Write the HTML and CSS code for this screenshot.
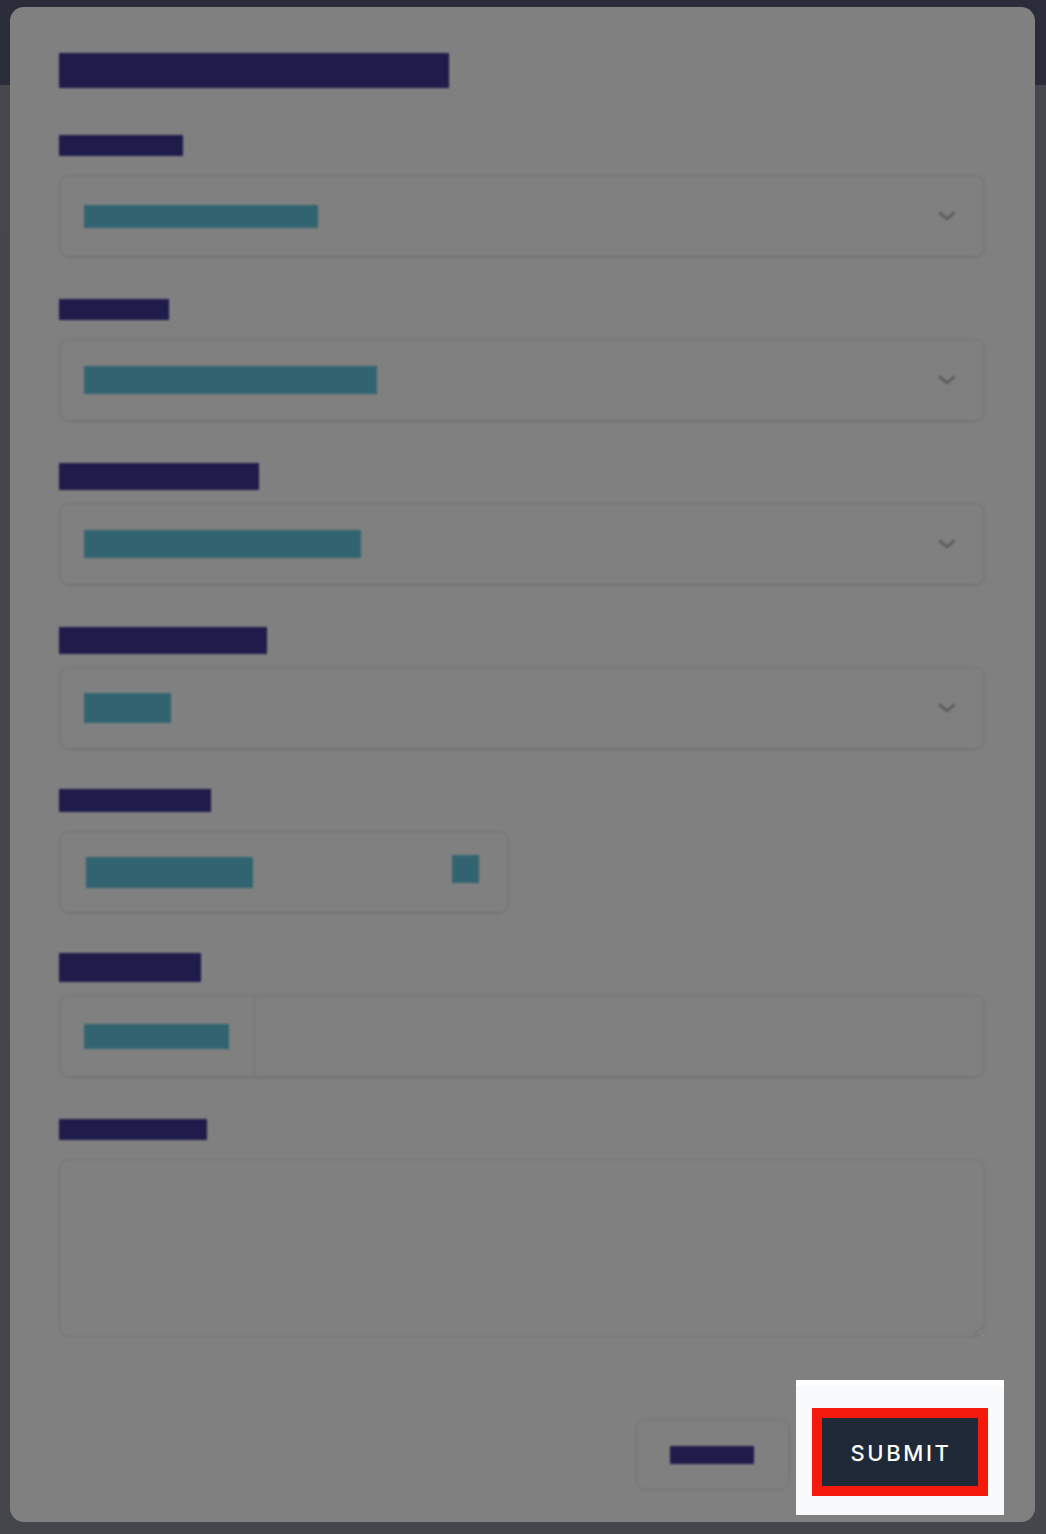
FILE: index.html
```html
<!DOCTYPE html>
<html lang="en">
<head>
<meta charset="utf-8">
<title>Form</title>
<link rel="stylesheet" href="styles.css">
</head>
<body>
<div class="page">
  <div class="modal">
    <div class="form">
      <div class="title"></div>

      <div class="field">
        <div class="label"><span class="lbar" style="width:124px;height:21px"></span></div>
        <div class="control select">
          <span class="vbar" style="width:234px;height:23px"></span>
          <svg class="chev" width="18" height="10" viewBox="0 0 18 10"><path d="M2 2l7 6 7-6" fill="none" stroke="#5a5a5a" stroke-width="2.6" stroke-linecap="round" stroke-linejoin="round"/></svg>
        </div>
      </div>

      <div class="field">
        <div class="label"><span class="lbar" style="width:110px;height:21px"></span></div>
        <div class="control select">
          <span class="vbar" style="width:293px;height:28px"></span>
          <svg class="chev" width="18" height="10" viewBox="0 0 18 10"><path d="M2 2l7 6 7-6" fill="none" stroke="#5a5a5a" stroke-width="2.6" stroke-linecap="round" stroke-linejoin="round"/></svg>
        </div>
      </div>

      <div class="field">
        <div class="label"><span class="lbar" style="width:200px;height:27px"></span></div>
        <div class="control select">
          <span class="vbar" style="width:277px;height:28px"></span>
          <svg class="chev" width="18" height="10" viewBox="0 0 18 10"><path d="M2 2l7 6 7-6" fill="none" stroke="#5a5a5a" stroke-width="2.6" stroke-linecap="round" stroke-linejoin="round"/></svg>
        </div>
      </div>

      <div class="field">
        <div class="label"><span class="lbar" style="width:208px;height:27px"></span></div>
        <div class="control select">
          <span class="vbar" style="width:87px;height:30px"></span>
          <svg class="chev" width="18" height="10" viewBox="0 0 18 10"><path d="M2 2l7 6 7-6" fill="none" stroke="#5a5a5a" stroke-width="2.6" stroke-linecap="round" stroke-linejoin="round"/></svg>
        </div>
      </div>

      <div class="field">
        <div class="label label-up"><span class="lbar" style="width:152px;height:23px"></span></div>
        <div class="control input-short">
          <span class="vbar" style="width:167px;height:31px"></span>
          <span class="sq"></span>
        </div>
      </div>

      <div class="field">
        <div class="label label-up"><span class="lbar" style="width:142px;height:29px"></span></div>
        <div class="control group">
          <div class="addon"><span class="vbar" style="width:145px;height:25px"></span></div>
          <div class="group-input"></div>
        </div>
      </div>

      <div class="field">
        <div class="label"><span class="lbar" style="width:148px;height:21px"></span></div>
        <textarea class="area"></textarea>
      </div>
    </div>

    <div class="footer">
      <div class="cancel"><span class="cbar"></span></div>
      <div class="highlight">
        <div class="ring">
          <button class="submit" type="button">SUBMIT</button>
        </div>
      </div>
    </div>
  </div>
</div>
</body>
</html>
```

FILE: styles.css
```css
* { box-sizing: border-box; }

html, body {
  margin: 0;
  padding: 0;
}

body {
  width: 1046px;
  height: 1534px;
  overflow: hidden;
  background: linear-gradient(#2a2c3a 0, #2a2c3a 85px, #45474d 85px, #44464c 100%);
  font-family: Inter, "Noto Sans", sans-serif;
}

.page {
  padding: 7px 11px 12px 10px;
}

.modal {
  height: 1515px;
  background: #808080;
  border-radius: 14px;
  padding: 46px 50px 7px 49px;
  display: flex;
  flex-direction: column;
}

.form {
  filter: blur(1.1px);
  display: flex;
  flex-direction: column;
}

.title {
  width: 390px;
  height: 35px;
  background: #1f1b4a;
  margin-bottom: 47px;
}

.field {
  display: flex;
  flex-direction: column;
  margin-bottom: 42px;
}

.field:last-child { margin-bottom: 0; }

.label {
  height: 40px;
  display: flex;
  align-items: flex-start;
}

.label-up .lbar { margin-top: -2px; }

.lbar {
  display: block;
  background: #1f1b4a;
}

.control {
  height: 82px;
  border: 1.5px solid #727272;
  border-radius: 10px;
  box-shadow: 0 1px 2px rgba(0, 0, 0, 0.08);
  display: flex;
  align-items: center;
}

.vbar {
  display: block;
  background: #316470;
}

.select {
  justify-content: space-between;
  padding: 0 28px 0 24px;
}

.chev { display: block; margin-top: -1px; }

.input-short {
  width: 450px;
  justify-content: space-between;
  padding: 0 29px 0 26px;
}

.sq {
  width: 27px;
  height: 28px;
  background: #316470;
  margin-top: -6px;
}

.group {
  align-items: stretch;
}

.addon {
  width: 195px;
  border-right: 1.5px solid #727272;
  display: flex;
  align-items: center;
  padding-left: 24px;
}

.group-input { flex: 1; }

.area {
  display: block;
  width: 100%;
  height: 178px;
  margin: 0;
  background: #808080;
  border: 1.5px solid #727272;
  border-radius: 10px;
  resize: both;
  font: inherit;
}

.footer {
  margin-top: 43px;
  margin-right: -19px;
  display: flex;
  justify-content: flex-end;
  align-items: flex-start;
  gap: 6px;
}

.cancel {
  filter: blur(1.1px);
  margin-top: 39px;
  width: 154px;
  height: 71px;
  border: 1.5px solid #727272;
  border-radius: 10px;
  display: flex;
  align-items: center;
  justify-content: center;
}

.cbar {
  display: block;
  width: 84px;
  height: 18px;
  background: #1f1b4a;
  margin-left: -2px;
}

.highlight {
  width: 208px;
  height: 135px;
  background: #f8f9fb;
  border-top: 6px solid #ffffff;
  padding: 22px 16px 0 16px;
}

.ring {
  border: 10px solid #f5190b;
}

.submit {
  display: flex;
  align-items: center;
  justify-content: center;
  width: 100%;
  height: 68px;
  margin: 0;
  border: 0;
  background: #1f2937;
  color: #ffffff;
  font-family: Inter, "Noto Sans", sans-serif;
  font-size: 22px;
  font-weight: 500;
  letter-spacing: 2.6px;
  padding: 2px 0 0 2px;
}
```
